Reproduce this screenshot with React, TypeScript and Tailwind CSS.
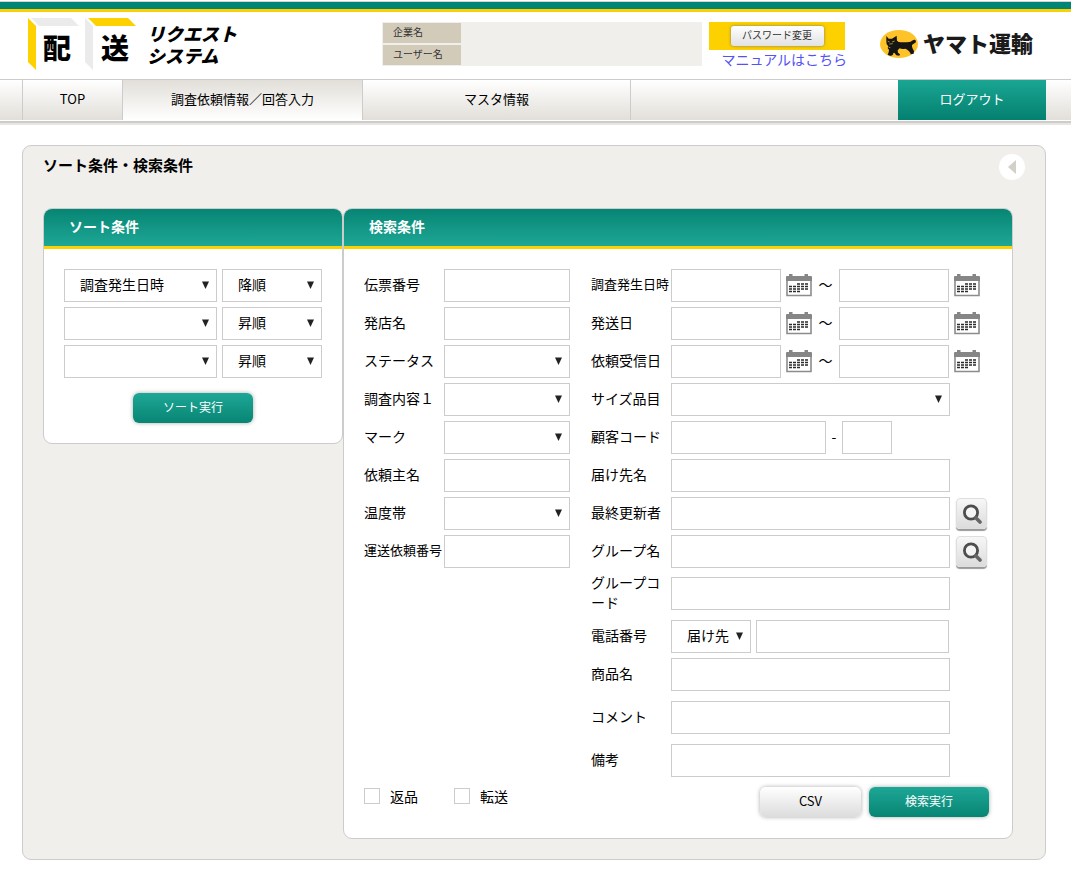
import React, { useState } from 'react';

const DateIcon = () => (
  <svg width="26" height="23" viewBox="0 0 26 23" aria-hidden="true">
    <path d="M1 2h24v19.5H1z" fill="#fff" />
    <path d="M1 6v15.5h24V6" fill="none" stroke="#8c8c8c" strokeWidth="1.6" />
    <path d="M0 7V3q0-1 1-1h2V0h3.5v2h12V0H22v2h3q1 0 1 1v4z" fill="#868686" />
    <g stroke="#2b2b2b" strokeWidth="1.6" strokeDasharray="3 1">
      <path d="M11 10h11" />
      <path d="M3 12.5h19" />
      <path d="M3 15h19" />
      <path d="M3 17.5h11" />
    </g>
  </svg>
);

const CatMark = () => (
  <svg width="38" height="28" viewBox="0 0 114 84" aria-hidden="true">
    <ellipse cx="57" cy="42" rx="57" ry="42" fill="#fdc328" />
    <path
      d="M19 18l7 8 10 0 14-9 1 15 5 4c12 2 24 1 36-1 5-2 8-7 13-5 5 2 3 9-4 11l-5 4c-1 8 4 13 6 19l-1 7-9 2-1-4c-3-6-9-11-15-13-7 1-12 1-17-1l-6 6 1 7 6 5-2 4-9-1-6-8-3 1c0 6-4 9-10 8l-7-3 3-7 1-7-4-6 2-5-5-6-1-8z"
      fill="#151515"
    />
    <path d="M23 34l6 2M36 36l8-3M28 42l10-1M26 52l5 1" stroke="#fdc328" strokeWidth="2" />
  </svg>
);

const SearchButton = ({ label }: { label: string }) => (
  <button
    type="button"
    aria-label={label}
    className="ml-[6px] flex h-[31px] w-[31px] items-center justify-center rounded-sm border border-[#dedede] bg-linear-to-b from-[#f7f7f7] to-[#dcdcdc] shadow-[0_2px_1px_#999]"
  >
    <svg width="20" height="20" viewBox="0 0 20 20" aria-hidden="true">
      <circle cx="9" cy="8.5" r="6.6" fill="#f4f4f4" stroke="#4d4d4d" strokeWidth="2.8" />
      <path d="M14 14l4 4" stroke="#666" strokeWidth="3.6" strokeLinecap="round" />
    </svg>
  </button>
);

type FieldProps = { id: string; label?: string; className?: string };

const TextBox = ({ id, label, className = '' }: FieldProps) => (
  <input
    id={id}
    type="text"
    aria-label={label}
    className={`h-[33px] border border-[#ccc] bg-white px-2 outline-none focus:border-[#008574] ${className}`}
  />
);

const SelectBox = ({ id, label, className = '', options = [''] }: FieldProps & { options?: string[] }) => (
  <span className={`relative inline-flex h-[33px] ${className}`}>
    <select
      id={id}
      aria-label={label}
      className="h-full w-full appearance-none border border-[#ccc] bg-white pb-1 pl-[15px] outline-none"
    >
      {options.map((option) => (
        <option key={option}>{option}</option>
      ))}
    </select>
    <svg
      className="pointer-events-none absolute right-2 top-3"
      width="7"
      height="8"
      viewBox="0 0 7 8"
      aria-hidden="true"
    >
      <path d="M0 0.5h7L3.5 8z" fill="#222" />
    </svg>
  </span>
);

const Row = ({
  id,
  label,
  small = false,
  className = 'h-[33px]',
  children
}: {
  id: string;
  label: string;
  small?: boolean;
  className?: string;
  children: React.ReactNode;
}) => (
  <div className={`flex items-center ${className}`}>
    <label
      htmlFor={id}
      className={`w-20 shrink-0 break-all pb-1 ${small ? 'text-[13px] whitespace-nowrap' : ''}`}
    >
      {label}
    </label>
    {children}
  </div>
);

const DateRange = ({ id, label }: { id: string; label: string }) => (
  <>
    <TextBox id={id} className="w-[110px]" />
    <button type="button" aria-label={`${label} 開始日`} className="ml-[5px]">
      <DateIcon />
    </button>
    <span className="w-[27px] pb-1 text-center">～</span>
    <TextBox id={`${id}-to`} label={`${label} 終了`} className="w-[110px]" />
    <button type="button" aria-label={`${label} 終了日`} className="ml-[5px]">
      <DateIcon />
    </button>
  </>
);

const Card = ({ title, className, children }: { title: string; className: string; children: React.ReactNode }) => (
  <section className={`overflow-hidden rounded-[9px] border border-[#ccc] bg-white ${className}`}>
    <h2 className="h-10 border-b-3 border-[#fdd000] bg-linear-to-b from-[#078574] to-[#1da796] pl-[25px] font-bold leading-[34px] text-white">
      {title}
    </h2>
    {children}
  </section>
);

const Header = () => (
  <header>
    <div className="mt-px h-px bg-[#d5d5d5]" />
    <div className="h-[10px] border-b-3 border-[#fdd000] bg-[#008574]" />
    <div className="flex h-[67px] items-start pl-7">
      <h1 className="mt-[6px] flex w-[210px] shrink-0 font-black">
        <span className="relative block h-[52px] w-[57px] pl-[15px] pt-2 text-[28px] leading-[42px]">
          <svg className="absolute left-0 top-0" width="52" height="52" viewBox="0 0 52 52" aria-hidden="true">
            <path d="M0 0l8 8v44l-8-8z" fill="#fdd000" />
            <path d="M3 0h40l8 8H11z" fill="#ebebeb" />
          </svg>
          配
        </span>
        <span className="relative block h-[52px] w-[62px] pl-4 pt-2 text-[28px] leading-[42px]">
          <svg className="absolute left-0 top-0" width="52" height="52" viewBox="0 0 52 52" aria-hidden="true">
            <path d="M0 0l8 8v44l-8-8z" fill="#ebebeb" />
            <path d="M3 0h40l8 8H11z" fill="#fdd000" />
          </svg>
          送
        </span>
        <span className="mt-[6px] font-['Liberation_Sans','Noto_Sans_CJK_JP',sans-serif] text-[18px] italic leading-[22px]">
          リクエスト
          <br />
          システム
        </span>
      </h1>
      <div className="ml-36 mt-[10px] w-80 shrink-0 bg-[#f0efeb] p-px text-[10px] text-[#333]">
        <dl className="grid gap-[2px]">
          <dt className="h-5 w-[78px] bg-[#d3cbb9] pl-[10px] leading-[18px]">企業名</dt>
          <dt className="h-5 w-[78px] bg-[#d3cbb9] pl-[10px] leading-[18px]">ユーザー名</dt>
        </dl>
      </div>
      <div className="ml-[7px] mt-[10px] w-[138px] shrink-0">
        <div className="flex h-7 w-[136px] items-center justify-center bg-[#fdd000]">
          <button
            type="button"
            className="h-5 w-[93px] rounded-[3px] bg-linear-to-b from-white to-[#e2e2e2] pb-[2px] text-[10px] leading-[18px] text-[#333] shadow-[0_0_3px_#777]"
          >
            パスワード変更
          </button>
        </div>
        <a href="#manual" className="block whitespace-nowrap text-right leading-[18px] text-[#5252f7]">
          マニュアルはこちら
        </a>
      </div>
      <div className="ml-[33px] mt-[18px] flex shrink-0 items-start gap-[5px] text-[22px] font-black leading-6 text-[#1a1a1a]">
        <CatMark />
        <span>ヤマト運輸</span>
      </div>
    </div>
    <div className="border-t border-[#ccc] pb-px">
      <nav className="flex h-10 bg-linear-to-b from-white to-[#e2dfd9] pl-[22px] pr-[25px] text-center text-[13px] leading-[38px]">
        <a href="#top" className="w-[100px] border-l border-[#ccc]">
          TOP
        </a>
        <a href="#input" className="w-[241px] border-x border-[#ccc] bg-linear-to-b from-[#e2dfd9] to-white">
          調査依頼情報／回答入力
        </a>
        <a href="#master" className="w-[268px] border-r border-[#ccc]">
          マスタ情報
        </a>
        <a href="#logout" className="ml-auto w-[148px] bg-linear-to-b from-[#1aa693] to-[#048070] text-white">
          ログアウト
        </a>
      </nav>
    </div>
    <div className="h-1 border-t-2 border-[#ccc] bg-[#e9e6e2]" />
  </header>
);

const SortCard = () => (
  <Card title="ソート条件" className="w-[300px] shrink-0">
    <form className="px-5 pb-5 pt-5">
      <div className="grid grid-cols-[153px_100px] gap-[5px]">
        <SelectBox id="sort-key-1" label="ソート項目1" options={['調査発生日時']} />
        <SelectBox id="sort-dir-1" label="並び順1" options={['降順', '昇順']} />
        <SelectBox id="sort-key-2" label="ソート項目2" />
        <SelectBox id="sort-dir-2" label="並び順2" options={['昇順', '降順']} />
        <SelectBox id="sort-key-3" label="ソート項目3" />
        <SelectBox id="sort-dir-3" label="並び順3" options={['昇順', '降順']} />
      </div>
      <button
        type="button"
        className="mx-auto mt-[15px] block h-[30px] w-[120px] rounded-md bg-linear-to-b from-[#1da796] to-[#078574] pb-[2px] text-[12px] text-white shadow-[0_0_4px_#aaa]"
      >
        ソート実行
      </button>
    </form>
  </Card>
);

const SearchCard = () => (
  <Card title="検索条件" className="min-w-[670px] flex-1">
    <form className="px-5 pb-[21px] pt-5">
      <div className="flex gap-[21px]">
        <div className="flex flex-col gap-[5px]">
          <Row id="slip" label="伝票番号">
            <TextBox id="slip" className="w-[126px]" />
          </Row>
          <Row id="store" label="発店名">
            <TextBox id="store" className="w-[126px]" />
          </Row>
          <Row id="status" label="ステータス">
            <SelectBox id="status" className="w-[126px]" />
          </Row>
          <Row id="content" label="調査内容１">
            <SelectBox id="content" className="w-[126px]" />
          </Row>
          <Row id="mark" label="マーク">
            <SelectBox id="mark" className="w-[126px]" />
          </Row>
          <Row id="client" label="依頼主名">
            <TextBox id="client" className="w-[126px]" />
          </Row>
          <Row id="temp" label="温度帯">
            <SelectBox id="temp" className="w-[126px]" />
          </Row>
          <Row id="request" label="運送依頼番号" small>
            <TextBox id="request" className="w-[126px]" />
          </Row>
        </div>
        <div className="flex flex-col gap-[5px]">
          <Row id="occurred" label="調査発生日時" small>
            <DateRange id="occurred" label="調査発生日時" />
          </Row>
          <Row id="shipped" label="発送日">
            <DateRange id="shipped" label="発送日" />
          </Row>
          <Row id="received" label="依頼受信日">
            <DateRange id="received" label="依頼受信日" />
          </Row>
          <Row id="size" label="サイズ品目">
            <SelectBox id="size" className="w-[279px]" />
          </Row>
          <Row id="customer" label="顧客コード">
            <TextBox id="customer" className="w-[155px]" />
            <span className="w-4 pb-1 text-center">-</span>
            <TextBox id="customer-sub" label="顧客コード枝番" className="w-[50px]" />
          </Row>
          <Row id="dest" label="届け先名">
            <TextBox id="dest" className="w-[279px]" />
          </Row>
          <Row id="updater" label="最終更新者">
            <TextBox id="updater" className="w-[279px]" />
            <SearchButton label="最終更新者を検索" />
          </Row>
          <Row id="group" label="グループ名">
            <TextBox id="group" className="w-[279px]" />
            <SearchButton label="グループ名を検索" />
          </Row>
          <Row id="group-code" label="グループコード" className="mb-px h-[41px]">
            <TextBox id="group-code" className="w-[279px]" />
          </Row>
          <Row id="tel" label="電話番号">
            <SelectBox id="tel-type" label="電話番号の種別" className="w-20" options={['届け先']} />
            <TextBox id="tel" className="ml-[5px] w-[193px]" />
          </Row>
          <Row id="item" label="商品名">
            <TextBox id="item" className="w-[279px]" />
          </Row>
          <Row id="comment" label="コメント" className="mt-[5px] h-[33px]">
            <TextBox id="comment" className="w-[279px]" />
          </Row>
          <Row id="note" label="備考" className="mt-[5px] h-[33px]">
            <TextBox id="note" className="w-[279px]" />
          </Row>
        </div>
      </div>
      <div className="mt-[10px] flex w-[625px] items-start">
        {['返品', '転送'].map((name) => (
          <label key={name} className="flex h-[18px] w-[90px] items-center gap-[10px]">
            <input
              type="checkbox"
              className="h-4 w-4 appearance-none border border-[#ccc] bg-white checked:bg-[#078574]"
            />
            {name}
          </label>
        ))}
        <button
          type="button"
          className="ml-auto h-[30px] w-[101px] rounded-md bg-linear-to-b from-white to-[#dcdcdc] pb-[2px] text-[13px] shadow-[0_0_4px_#aaa]"
        >
          CSV
        </button>
        <button
          type="button"
          className="ml-2 h-[30px] w-[120px] rounded-md bg-linear-to-b from-[#1da796] to-[#078574] pb-[2px] text-[12px] text-white shadow-[0_0_4px_#aaa]"
        >
          検索実行
        </button>
      </div>
    </form>
  </Card>
);

const App: React.FC = () => {
  const [open, setOpen] = useState(true);

  return (
    <div lang="ja" className="bg-white pb-5 font-['Noto_Sans_CJK_JP',sans-serif] text-[14px] leading-5 text-black">
      <Header />
      <main className="ml-[22px] mr-[25px] mt-5 rounded-[9px] border border-[#ccc] bg-[#f0efeb] pb-5 pl-5 pr-8">
        <div className="mb-7 flex items-start justify-between">
          <h2 className="mt-[9px] text-[15px] font-bold">ソート条件・検索条件</h2>
          <button
            type="button"
            aria-label="検索条件の開閉"
            aria-expanded={open}
            onClick={() => setOpen(!open)}
            className="-mr-3 mt-2 flex h-[26px] w-[26px] items-center justify-center rounded-full bg-white"
          >
            <svg width="8" height="14" viewBox="0 0 8 14" aria-hidden="true">
              <path d="M8 0v14L0 7z" fill="#d3d0c8" />
            </svg>
          </button>
        </div>
        {open && (
          <div className="flex items-start">
            <SortCard />
            <SearchCard />
          </div>
        )}
      </main>
    </div>
  );
};

export default App;
